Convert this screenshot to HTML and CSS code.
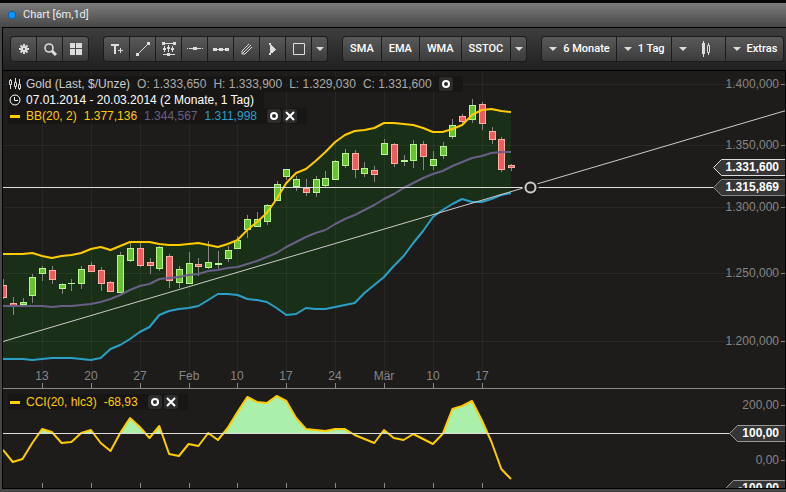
FILE: index.html
```html
<!DOCTYPE html>
<html lang="de">
<head>
  <meta charset="utf-8">
  <title>Chart [6m,1d]</title>
  <link rel="stylesheet" href="styles.css">
</head>
<body>
  <div class="window">
    <header class="titlebar">
      <span class="status-dot"></span>
      <h1>Chart [6m,1d]</h1>
    </header>

    <div class="toolbar">
      <div class="group">
        <button class="tool" title="Einstellungen">
          <svg width="12" height="12" viewBox="0 0 12 12"><g stroke="#ddd" stroke-width="2"><path d="M6 1v10M1 6h10M2.500 2.500l7 7M9.500 2.500l-7 7"/></g><circle cx="6" cy="6" r="3" fill="#ddd"/><circle cx="6" cy="6" r="1" fill="#444"/></svg>
        </button>
        <button class="tool" title="Suche">
          <svg width="14" height="14" viewBox="0 0 14 14" fill="none" stroke="#ddd"><circle cx="6" cy="6" r="4" stroke-width="1.6"/><path d="M9 9l4 4" stroke-width="3"/></svg>
        </button>
        <button class="tool" title="Layout">
          <svg width="12" height="12" viewBox="0 0 12 12" fill="#ddd"><path d="M0 0h5v5H0zM6 0h6v5H6zM0 6h5v6H0zM6 6h6v6H6z"/></svg>
        </button>
      </div>

      <div class="group">
        <button class="tool" title="Text">
          <svg width="14" height="14" viewBox="0 0 14 14" stroke="#ddd" fill="none"><path d="M1 3h8M5 3v9" stroke-width="2"/><path d="M8 8.500h5M10.500 6v5"/></svg>
        </button>
        <button class="tool" title="Trendlinie">
          <svg width="14" height="14" viewBox="0 0 14 14" fill="#ddd"><path d="M0 11h3v3H0zM11 0h3v3h-3z"/><path d="M1.500 12.500l11-11" stroke="#ddd"/></svg>
        </button>
        <button class="tool" title="Bereich">
          <svg width="14" height="14" viewBox="0 0 14 14" fill="#ddd"><path d="M0 0h3v3H0zM11 0h3v3h-3zM5 11h3v3H5zM1 1h12v1H1zM1 12h12v1H1zM2 4h1v6H2zM6 3h1v7H6zM10 4h1v6h-1zM1 6h3v2H1zM5 5h3v2H5zM9 6h3v2H9z"/></svg>
        </button>
        <button class="tool" title="Horizontale">
          <svg width="16" height="14" viewBox="0 0 16 14" fill="#ddd"><path d="M0 6h1v1H0zM2 6h12v1H2zM15 6h1v1h-1zM6 5h4v3H6z"/></svg>
        </button>
        <button class="tool" title="Segment">
          <svg width="16" height="14" viewBox="0 0 16 14" fill="#ddd"><path d="M1 7h14v1H1zM0 6h4v3H0zM6 6h4v3H6zM12 6h4v3h-4z"/></svg>
        </button>
        <button class="tool" title="Kanal">
          <svg width="12" height="12" viewBox="0 0 12 12" fill="none" stroke="#ddd"><path d="M1 11V8l7-7M1 11h3l7-7M2 10l8-8"/></svg>
        </button>
        <button class="tool" title="Fibonacci">
          <svg width="10" height="14" viewBox="0 0 10 14" fill="#ddd"><path d="M1 1h2v2h1v1h1v1h1v1h1v1h1v1H7v1H6v1H5v1H3v2H1v-2h1V3H1z"/></svg>
        </button>
        <button class="tool" title="Rechteck">
          <svg width="12" height="12" viewBox="0 0 12 12" fill="none" stroke="#ddd"><path d="M.5.5h11v11H.5z"/></svg>
        </button>
        <button class="tool more" title="Mehr Werkzeuge"><i class="caret"></i></button>
      </div>

      <div class="group">
        <button class="text-btn">SMA</button>
        <button class="text-btn">EMA</button>
        <button class="text-btn">WMA</button>
        <button class="text-btn">SSTOC</button>
        <button class="tool more" title="Mehr Indikatoren"><i class="caret"></i></button>
      </div>

      <div class="group">
        <button class="menu-btn"><i class="caret"></i>6 Monate</button>
        <button class="menu-btn"><i class="caret"></i>1 Tag</button>
        <button class="menu-btn type" title="Charttyp"><i class="caret"></i>
          <svg width="10" height="16" viewBox="0 0 10 16" fill="#ddd"><path d="M2 0h1v16H2zM1 2h3v11H1zM7 2h1v2H7zM7 12h1v2H7z"/><path d="M6.500 4.500h2v7h-2z" fill="none" stroke="#ddd"/></svg>
        </button>
        <button class="menu-btn"><i class="caret"></i>Extras</button>
      </div>
    </div>

    <main class="charts">
      <section class="panel price">
        <svg class="plot" id="pricePlot"></svg>
        <div class="legend">
          <div class="row quote">
            <svg width="12" height="12" viewBox="0 0 12 12" fill="none" stroke="#ddd"><path d="M1.500 1v1M1.500 7v4M6.500 0v4M6.500 9v2M10.500 1v5M10.500 10v2M.5 2.500h2v4h-2zM5.500 4.500h2v4h-2zM9.500 6.500h2v4h-2z"/></svg>
            <span class="name">Gold (Last, $/Unze)</span>
            <span>O: 1.333,650</span><span>H: 1.333,900</span><span>L: 1.329,030</span><span>C: 1.331,600</span>
            <button class="mini" title="Optionen"><svg width="10" height="10" viewBox="0 0 10 10"><circle cx="5" cy="5" r="3" fill="none" stroke="#fff" stroke-width="2"/></svg></button>
          </div>
          <div class="row range">
            <svg width="12" height="12" viewBox="0 0 12 12" fill="none" stroke="#fff"><circle cx="6" cy="6" r="5"/><path d="M5.500 3v3.500H9"/></svg>
            <span>07.01.2014 - 20.03.2014 (2 Monate, 1 Tag)</span>
          </div>
          <div class="row">
            <i class="dash"></i>
            <span class="upper">BB(20, 2)</span><span class="upper">1.377,136</span><span class="middle">1.344,567</span><span class="lower">1.311,998</span>
            <span class="actions">
              <button class="mini" title="Optionen"><svg width="10" height="10" viewBox="0 0 10 10"><circle cx="5" cy="5" r="3" fill="none" stroke="#fff" stroke-width="2"/></svg></button>
              <button class="mini" title="Entfernen"><svg width="10" height="10" viewBox="0 0 10 10"><path d="M1 1l8 8M9 1L1 9" stroke="#fff" stroke-width="2"/></svg></button>
            </span>
          </div>
        </div>
        <div class="axis" id="priceAxis"></div>
      </section>

      <section class="panel cci">
        <svg class="plot" id="cciPlot"></svg>
        <div class="legend">
          <div class="row">
            <i class="dash"></i>
            <span class="upper">CCI(20, hlc3)</span><span class="upper">-68,93</span>
            <span class="actions">
              <button class="mini" title="Optionen"><svg width="10" height="10" viewBox="0 0 10 10"><circle cx="5" cy="5" r="3" fill="none" stroke="#fff" stroke-width="2"/></svg></button>
              <button class="mini" title="Entfernen"><svg width="10" height="10" viewBox="0 0 10 10"><path d="M1 1l8 8M9 1L1 9" stroke="#fff" stroke-width="2"/></svg></button>
            </span>
          </div>
        </div>
        <div class="axis" id="cciAxis"></div>
      </section>
    </main>
  </div>
  <script src="chart.js"></script>
</body>
</html>
```

FILE: styles.css
```css
* {
  box-sizing: border-box;
}

body {
  margin: 0;
  background: #000;
  color: #aaa;
  font: 12px/16px "Liberation Sans", Arial, sans-serif;
}

h1 {
  margin: 0;
  color: #eee;
  font: 11px/16px Roboto, Tahoma, sans-serif;
}

button {
  margin: 0;
  padding: 0;
  border: 0;
  color: #fff;
  font: 500 11px/16px Roboto, Arial, sans-serif;
  cursor: pointer;
}

svg {
  display: block;
  flex: none;
}

.window {
  min-height: 100vh;
  border-top: 3px solid #080808;
  background: #464646;
}

.titlebar {
  display: flex;
  align-items: center;
  gap: 7px;
  height: 24px;
  padding-left: 8px;
  background: linear-gradient(#7c7c7c, #474747);
}

.status-dot {
  width: 8px;
  height: 8px;
  border: 1px solid #0662b8;
  border-radius: 3px;
  background: #0a96ff;
}

.toolbar {
  display: flex;
  gap: 14px;
  height: 44px;
  margin-left: 2px;
  padding: 8px 0 0 7px;
  border: solid #000;
  border-width: 1px 0 1px 1px;
  background: linear-gradient(#3e3e3e, #202020);
}

.group {
  display: flex;
  flex: none;
  gap: 1px;
  height: 26px;
  padding: 1px;
  border-radius: 4px;
  background: #1c1c1c;
}

.group button {
  display: flex;
  align-items: center;
  justify-content: center;
  background: linear-gradient(#595959, #3b3b3b);
}

.group button:hover {
  background: linear-gradient(#6a6a6a, #4a4a4a);
}

.group button:first-child {
  border-radius: 3px 0 0 3px;
}

.group button:last-child {
  border-radius: 0 3px 3px 0;
}

.group .tool {
  width: 25px;
}

.group .more {
  width: 15px;
}

.group .text-btn {
  padding: 0 7px;
}

.group .menu-btn {
  gap: 6px;
  padding: 0 6px 0 7px;
}

.group .type {
  gap: 14px;
  padding-right: 14px;
}

.caret {
  border: 4px solid transparent;
  border-top-color: #ddd;
  border-bottom: 0;
}

.charts {
  margin-left: 2px;
  padding: 0 1px 1px;
  background: #000;
}

.panel {
  position: relative;
  overflow: hidden;
  background: #1e1c1a;
}

.price {
  height: 317px;
}

.cci {
  height: 100px;
  border-top: 1px solid #888;
}

.plot {
  width: 100%;
  height: 100%;
}

.plot text {
  fill: #858585;
  text-anchor: middle;
}

/* legend lies over the plot */
.legend {
  position: absolute;
  top: 5px;
  left: 5px;
}

.row {
  display: flex;
  align-items: center;
  gap: 7px;
  width: max-content;
  height: 16px;
  padding: 0 10px 0 1px;
  background: rgba(20, 20, 18, 0.7);
  white-space: nowrap;
}

.row svg + span,
.row .dash + span {
  margin-left: -2px;
}

.name {
  color: #ccc;
}

.range {
  color: #fff;
}

.dash {
  width: 10px;
  height: 3px;
  margin: 0 1px;
  background: #ffd000;
}

.upper {
  color: #ffcc00;
}

.middle {
  color: #685f86;
}

.lower {
  color: #2c9fc9;
}

.actions {
  display: flex;
  gap: 2px;
  padding-left: 3px;
}

.mini {
  display: flex;
  align-items: center;
  justify-content: center;
  width: 14px;
  height: 14px;
  border-radius: 3px;
  background: #2c2c2c;
}

/* price labels sit on the plot at their value */
.axis {
  position: absolute;
  top: 0;
  right: 0;
  bottom: 0;
  z-index: 1;
}

.tick {
  position: absolute;
  right: 0;
  display: flex;
  align-items: center;
  gap: 2px;
  height: 16px;
  margin-top: -8px;
  color: #858585;
}

.tick::after {
  content: "";
  width: 4px;
  height: 1px;
  background: #858585;
}

.flag {
  position: absolute;
  right: 0;
  height: 17px;
  margin-top: -8px;
  padding: 0 6px 0 13px;
  color: #fff;
  font-weight: bold;
  line-height: 17px;
}

.flag svg {
  position: absolute;
  top: 0;
  left: 0;
  z-index: -1;
}
```

FILE: chart.js
```js
const NS = 'http://www.w3.org/2000/svg';
const STEP = 9.77;

// high, body top, body bottom, low, rising
const candles = [
  [279,285,298,299,0],[297,303,306,315,0],[298,302,305,307,1],[274,277,296,303,1],
  [266,268,274,281,1],[266,270,280,284,0],[283,284,289,294,1],[279,283,284,291,1],
  [266,269,284,289,1],[262,265,272,272,0],[267,270,284,291,0],[281,282,292,292,0],
  [252,255,293,293,1],[243,248,261,262,1],[242,248,266,267,0],[258,262,266,274,0],
  [246,247,269,271,1],[254,256,281,288,0],[266,269,283,288,1],[252,263,284,284,1],
  [258,264,267,276,0],[241,262,268,269,1],[251,263,265,269,1],[246,250,259,262,1],
  [236,240,249,249,1],[215,219,230,238,1],[212,219,227,227,1],[204,205,222,225,1],
  [181,184,201,201,1],[169,169,177,180,1],[176,179,187,191,1],[179,188,193,196,0],
  [176,179,193,197,1],[171,178,186,187,1],[160,161,180,180,1],[149,153,166,168,1],
  [150,153,170,178,0],[162,168,174,177,1],[166,170,175,182,0],[139,143,155,155,1],
  [143,144,164,167,0],[155,160,162,166,1],[140,144,161,168,1],[141,144,157,170,0],
  [151,159,166,170,1],[142,146,156,159,1],[119,125,137,139,1],[114,116,122,123,0],
  [99,105,120,123,1],[102,104,124,130,0],[127,131,140,144,0],[137,139,170,172,0],
  [164,165,168,171,0]
];

const upper = [254,254,254,253,256,258,256,255,253,249,247,250,246,242,242,242,244,245,245,244,
  243,245,247,244,240,230,222,213,199,183,173,169,161,152,142,135,131,130,128,123,
  123,124,125,128,132,132,129,125,115,110,109,111,112];
const middle = [306,306,306,306,306,307,306,306,305,304,302,299,295,290,286,284,279,278,277,275,
  274,271,270,268,267,264,261,257,253,247,242,237,233,230,224,219,215,210,205,199,
  194,188,183,178,174,171,166,162,158,156,153,152,152];
const lower = [359,359,359,360,359,358,358,358,359,360,358,349,345,339,332,327,315,311,309,308,
  306,300,294,294,295,299,300,302,308,315,314,308,309,309,307,305,303,293,285,277,
  266,256,243,231,217,210,204,199,202,202,199,195,193];
const cci = [450,462,459,443,429,432,443,442,433,430,443,451,433,418,427,438,426,454,456,444,
  446,433,440,428,412,397,402,403,396,401,418,429,430,431,429,429,435,439,443,430,
  438,440,434,439,444,434,409,406,401,420,442,469,479];

const days = ['13', '20', '27', 'Feb', '10', '17', '24', 'Mär', '10', '17'];
const dayX = i => Math.round((4 + i * 5) * STEP);

function add(parent, tag, attrs, text) {
  const el = document.createElementNS(NS, tag);
  for (const key in attrs) el.setAttribute(key, attrs[key]);
  if (text) el.textContent = text;
  parent.appendChild(el);
  return el;
}

function points(values) {
  return values.map((y, i) => (i * STEP).toFixed(1) + ',' + y);
}

function curve(parent, values, stroke) {
  add(parent, 'polyline', { points: points(values).join(' '), fill: 'none', stroke, 'stroke-width': 2, 'stroke-linejoin': 'round' });
}

function rect(parent, x, y, width, height, fill) {
  return add(parent, 'rect', { x, y, width, height, fill });
}

function drawPrice() {
  const g = add(document.getElementById('pricePlot'), 'g', { transform: 'translate(0,-71)' });

  add(g, 'polygon', { points: points(upper).concat(points(lower).reverse()).join(' '), fill: '#1a2f18' });
  days.forEach((d, i) => rect(g, dayX(i), 71, 1, 309, 'rgba(255,255,255,0.05)'));
  [84, 145, 207, 273, 341].forEach(y => rect(g, 0, y, '100%', 1, 'rgba(255,255,255,0.05)'));

  candles.forEach(([high, top, bottom, low, up], i) => {
    const x = Math.round(i * STEP);
    rect(g, x, high, 1, low - high, '#8a8484');
    rect(g, x - 3, top, 7, Math.max(bottom - top, 1), up ? '#b8f593' : '#ffb0aa');
    if (bottom - top > 2) rect(g, x - 2, top + 1, 5, bottom - top - 2, up ? '#69c22f' : '#f35b5b');
  });

  curve(g, lower, '#2c9fc9');
  curve(g, middle, '#685f86');
  curve(g, upper, '#ffcc00');

  rect(g, 0, 187, '100%', 1, '#ddd');
  add(g, 'line', { x1: 0, y1: 341.5, x2: 1566, y2: -120.5, stroke: '#ccc' });
  add(g, 'circle', { cx: 527.5, cy: 187.5, r: 8, fill: '#1e1c1a' });
  add(g, 'circle', { cx: 527.5, cy: 187.5, r: 5, fill: '#1e1c1a', stroke: '#ccc', 'stroke-width': 2 });

  days.forEach((d, i) => {
    rect(g, dayX(i), 383, 1, 5, '#888');
    add(g, 'text', { x: dayX(i), y: 380 }, d);
  });
}

function drawCci() {
  const g = add(document.getElementById('cciPlot'), 'g', { transform: 'translate(0,-389)' });
  const clip = add(g, 'clipPath', { id: 'overbought' });
  rect(clip, 0, 389, 800, 44);
  add(g, 'polygon', { points: '0,480 ' + points(cci).join(' ') + ' 508,480', fill: '#aaf0aa', 'clip-path': 'url(#overbought)' });
  curve(g, cci, '#ffcc00');
  rect(g, 0, 433, '100%', 1, '#ddd');
  days.forEach((d, i) => rect(g, dayX(i), 483, 1, 5, '#888'));
}

function tick(id, y, text) {
  const el = document.createElement('div');
  el.className = 'tick';
  el.style.top = y + 'px';
  el.textContent = text;
  document.getElementById(id).appendChild(el);
}

function flag(id, y, text, stroke) {
  const el = document.createElement('div');
  el.className = 'flag';
  el.style.top = y + 'px';
  el.textContent = text;
  document.getElementById(id).appendChild(el);
  const w = el.offsetWidth;
  const svg = add(el, 'svg', { width: w, height: 17 });
  add(svg, 'path', { d: `M${w + 1} .5H8.500L.5 8.500l8 8H${w + 1}`, fill: '#363636', stroke });
}

drawPrice();
drawCci();

tick('priceAxis', 13, '1.400,000');
tick('priceAxis', 74, '1.350,000');
tick('priceAxis', 136, '1.300,000');
tick('priceAxis', 202, '1.250,000');
tick('priceAxis', 270, '1.200,000');
flag('priceAxis', 96, '1.331,600', '#ddd');
flag('priceAxis', 116, '1.315,869', '#888');

tick('cciAxis', 16, '200,00');
tick('cciAxis', 71, '0,00');
flag('cciAxis', 44, '100,00', '#999');
flag('cciAxis', 99, '-100,00', '#999');
```
